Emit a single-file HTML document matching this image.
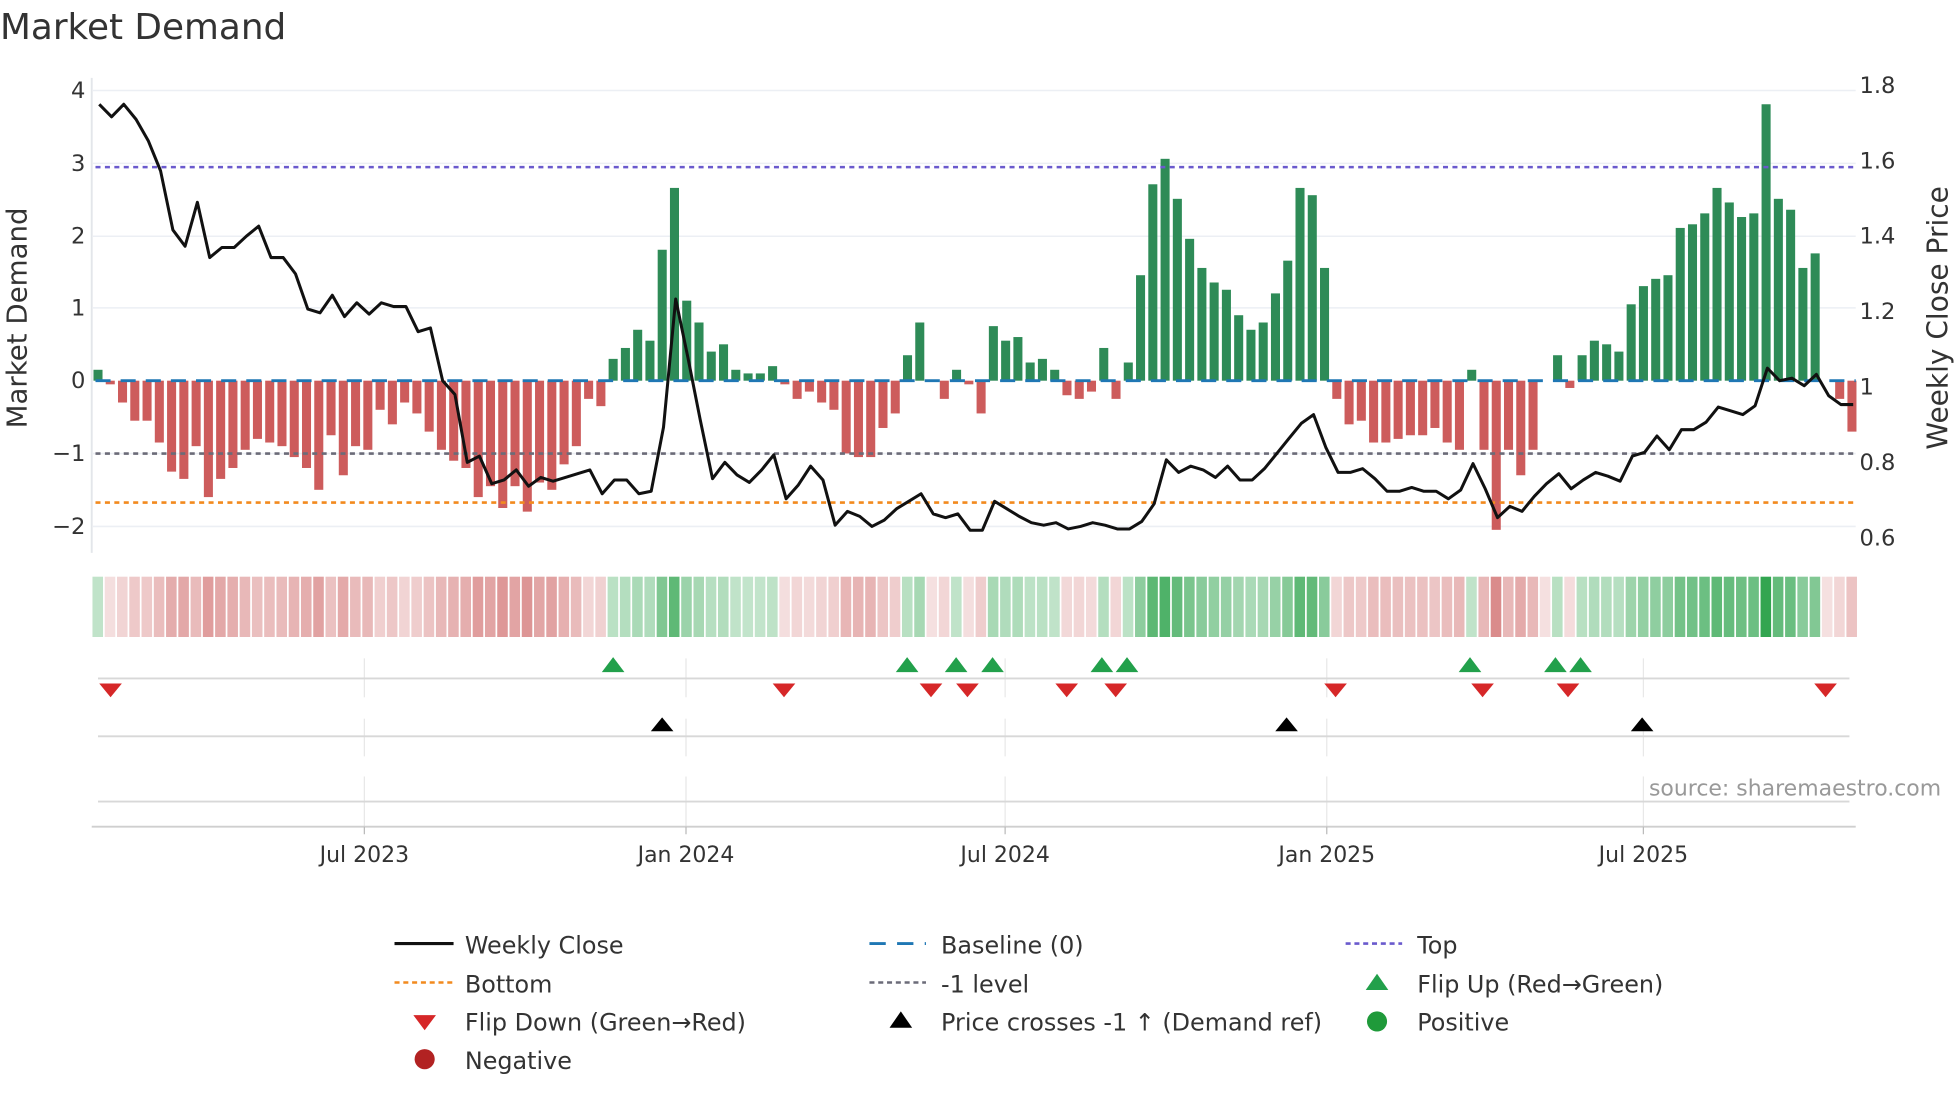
<!DOCTYPE html>
<html><head><meta charset="utf-8"><style>
html,body{margin:0;padding:0;background:#fff;}
svg{display:block;font-family:"DejaVu Sans","Liberation Sans",sans-serif;}
</style></head><body>
<svg id="s" width="1960" height="1102" viewBox="0 0 1560 877.1" preserveAspectRatio="none" xmlns="http://www.w3.org/2000/svg">
<text x="0" y="31" font-size="28.5" fill="#333">Market Demand</text>
<g id="grid" stroke="#eceff4" stroke-width="1.2">
<line x1="74" x2="1477" y1="72" y2="72"/><line x1="74" x2="1477" y1="130" y2="130"/><line x1="74" x2="1477" y1="188" y2="188"/><line x1="74" x2="1477" y1="245" y2="245"/><line x1="74" x2="1477" y1="361" y2="361"/><line x1="74" x2="1477" y1="419" y2="419"/>
</g>
<line x1="73" x2="73" y1="62" y2="440" stroke="#e3e6ea" stroke-width="1.5"/>
<g font-size="18" fill="#333" text-anchor="end">
<text x="68" y="78">4</text><text x="68" y="136">3</text><text x="68" y="194">2</text><text x="68" y="251">1</text><text x="68" y="309">0</text><text x="68" y="367">−1</text><text x="68" y="425">−2</text>
</g>
<g font-size="18" fill="#333">
<text x="1480" y="74">1.8</text><text x="1480" y="134">1.6</text><text x="1480" y="194">1.4</text><text x="1480" y="254">1.2</text><text x="1480" y="314">1</text><text x="1480" y="374">0.8</text><text x="1480" y="434">0.6</text>
</g>
<text transform="translate(21,253) rotate(-90)" font-size="22" fill="#333" text-anchor="middle">Market Demand</text>
<text transform="translate(1550,253) rotate(-90)" font-size="22.3" fill="#333" text-anchor="middle">Weekly Close Price</text>
<g id="bars"></g>
<line x1="76" x2="1477" y1="303" y2="303" stroke="#1f77b4" stroke-width="2.2" stroke-dasharray="12 8"/>
<line x1="76" x2="1477" y1="133" y2="133" stroke="#6a5acd" stroke-width="2" stroke-dasharray="4 3.5"/>
<line x1="76" x2="1477" y1="361" y2="361" stroke="#6b6b78" stroke-width="2" stroke-dasharray="4 3.5"/>
<line x1="76" x2="1477" y1="400" y2="400" stroke="#f28a1e" stroke-width="2" stroke-dasharray="4 3.5"/>
<polyline id="price" fill="none" stroke="#111" stroke-width="2.4" stroke-linejoin="round"/>
<g id="heat"></g>
<g stroke="#e8e8e8" stroke-width="1">
<line x1="290" x2="290" y1="524" y2="555"/><line x1="546" x2="546" y1="524" y2="555"/><line x1="800" x2="800" y1="524" y2="555"/><line x1="1056" x2="1056" y1="524" y2="555"/><line x1="1308" x2="1308" y1="524" y2="555"/>
<line x1="290" x2="290" y1="572" y2="602"/><line x1="546" x2="546" y1="572" y2="602"/><line x1="800" x2="800" y1="572" y2="602"/><line x1="1056" x2="1056" y1="572" y2="602"/><line x1="1308" x2="1308" y1="572" y2="602"/>
<line x1="290" x2="290" y1="618" y2="658"/><line x1="546" x2="546" y1="618" y2="658"/><line x1="800" x2="800" y1="618" y2="658"/><line x1="1056" x2="1056" y1="618" y2="658"/><line x1="1308" x2="1308" y1="618" y2="658"/>
</g>
<line x1="78" x2="1472" y1="540" y2="540" stroke="#d8d8d8" stroke-width="1.5"/>
<line x1="78" x2="1472" y1="586" y2="586" stroke="#d8d8d8" stroke-width="1.5"/>
<line x1="78" x2="1472" y1="638" y2="638" stroke="#d8d8d8" stroke-width="1.5"/>
<line x1="73" x2="1477" y1="658" y2="658" stroke="#cfcfcf" stroke-width="1.5"/>
<g stroke="#bbb" stroke-width="1"><line x1="290" x2="290" y1="658" y2="664"/><line x1="546" x2="546" y1="658" y2="664"/><line x1="800" x2="800" y1="658" y2="664"/><line x1="1056" x2="1056" y1="658" y2="664"/><line x1="1308" x2="1308" y1="658" y2="664"/></g>
<g id="marks"></g>
<text x="1545" y="633" font-size="17.5" fill="#999" text-anchor="end">source: sharemaestro.com</text>
<g font-size="17.5" fill="#333" text-anchor="middle">
<text x="290" y="686">Jul 2023</text><text x="546" y="686">Jan 2024</text><text x="800" y="686">Jul 2024</text><text x="1056" y="686">Jan 2025</text><text x="1308" y="686">Jul 2025</text>
</g>
<g font-size="19" fill="#333">
<line x1="314" x2="361" y1="751" y2="751" stroke="#111" stroke-width="2.5"/><text x="370" y="759">Weekly Close</text>
<line x1="692" x2="737" y1="751" y2="751" stroke="#1f77b4" stroke-width="2.2" stroke-dasharray="13 9"/><text x="749" y="759">Baseline (0)</text>
<line x1="1071" x2="1116" y1="751" y2="751" stroke="#6a5acd" stroke-width="2" stroke-dasharray="4 3"/><text x="1128" y="759">Top</text>
<line x1="314" x2="361" y1="782" y2="782" stroke="#f28a1e" stroke-width="2" stroke-dasharray="4 3"/><text x="370" y="790">Bottom</text>
<line x1="692" x2="737" y1="782" y2="782" stroke="#6b6b78" stroke-width="2" stroke-dasharray="4 3"/><text x="749" y="790">-1 level</text>
<polygon points="1087,788 1105,788 1096,775" fill="#22a04b"/><text x="1128" y="790">Flip Up (Red→Green)</text>
<polygon points="329,808 347,808 338,820" fill="#d62728"/><text x="370" y="820">Flip Down (Green→Red)</text>
<polygon points="708,818 726,818 717,805" fill="#000"/><text x="749" y="820">Price crosses -1 ↑ (Demand ref)</text>
<circle cx="1096" cy="813" r="8" fill="#1f9a3a"/><text x="1128" y="820">Positive</text>
<circle cx="338" cy="843" r="8" fill="#b22222"/><text x="370" y="851">Negative</text>
</g>
</svg>
<script>
var V=[0.15,-0.05,-0.3,-0.55,-0.55,-0.85,-1.25,-1.35,-0.9,-1.6,-1.35,-1.2,-0.95,-0.8,-0.85,-0.9,-1.05,-1.2,-1.5,-0.75,-1.3,-0.9,-0.95,-0.4,-0.6,-0.3,-0.45,-0.7,-0.95,-1.1,-1.2,-1.6,-1.45,-1.75,-1.45,-1.8,-1.4,-1.5,-1.15,-0.9,-0.25,-0.35,0.3,0.45,0.7,0.55,1.8,2.65,1.1,0.8,0.4,0.5,0.15,0.1,0.1,0.2,-0.05,-0.25,-0.15,-0.3,-0.4,-1.0,-1.05,-1.05,-0.65,-0.45,0.35,0.8,0.0,-0.25,0.15,-0.05,-0.45,0.75,0.55,0.6,0.25,0.3,0.15,-0.2,-0.25,-0.15,0.45,-0.25,0.25,1.45,2.7,3.05,2.5,1.95,1.55,1.35,1.25,0.9,0.7,0.8,1.2,1.65,2.65,2.55,1.55,-0.25,-0.6,-0.55,-0.85,-0.85,-0.8,-0.75,-0.75,-0.65,-0.85,-0.95,0.15,-0.95,-2.05,-0.95,-1.3,-0.95,0.0,0.35,-0.1,0.35,0.55,0.5,0.4,1.05,1.3,1.4,1.45,2.1,2.15,2.3,2.65,2.45,2.25,2.3,3.8,2.5,2.35,1.55,1.75,0.0,-0.25,-0.7];
var P=[83,93,83,95,112,136,183,196,161,205,197,197,188,180,205,205,218,246,249,235,252,241,250,241,244,244,264,261,303,314,368,363,385,382,374,387,380,383,380,377,374,393,382,382,393,391,340,238,285,334,381,368,378,384,374,362,397,386,371,382,418,407,411,419,414,405,399,393,409,412,409,422,422,399,405,411,416,418,416,421,419,416,418,421,421,415,401,366,376,371,374,380,371,382,382,373,361,349,337,330,356,376,376,373,381,391,391,388,391,391,397,390,369,389,412,403,407,395,385,377,389,382,376,379,383,363,360,347,358,342,342,336,324,327,330,323,293,303,301,307,298,315,322,322];
var ns="http://www.w3.org/2000/svg";
function el(t,a,p){var e=document.createElementNS(ns,t);for(var k in a)e.setAttribute(k,a[k]);p.appendChild(e);return e;}
var bars=document.getElementById('bars'),heat=document.getElementById('heat');
var dx=(1474-78)/143,pts=[];
for(var i=0;i<V.length;i++){
 var x=78+dx*i,v=V[i],h=Math.abs(v)*57.9;
 if(v>0)el('rect',{x:x-3.6,y:303-h,width:7.2,height:h,fill:'#2e8b57'},bars);
 else if(v<0)el('rect',{x:x-3.6,y:303,width:7.2,height:h,fill:'#cd5c5c'},bars);
 var c;
 if(v>0){var a=0.28+0.72*Math.min(v/3.8,1);c='rgb('+Math.round(255-(255-50)*a)+','+Math.round(255-(255-165)*a)+','+Math.round(255-(255-80)*a)+')';}
 else{var a=0.2+0.55*Math.min(-v/2.05,1);c='rgb('+Math.round(255-(255-205)*a)+','+Math.round(255-(255-100)*a)+','+Math.round(255-(255-100)*a)+')';}
 el('rect',{x:x-4.4,y:459,width:8.4,height:48,fill:c},heat);
 pts.push((x+1).toFixed(1)+','+P[i]);
}
document.getElementById('price').setAttribute('points',pts.join(' '));
var m=document.getElementById('marks');
[488,722,761,790,877,897,1170,1238,1258].forEach(function(x){el('polygon',{points:(x-9)+',535 '+(x+9)+',535 '+x+',523',fill:'#22a04b'},m);});
[88,624,741,770,849,888,1063,1180,1248,1453].forEach(function(x){el('polygon',{points:(x-9)+',544 '+(x+9)+',544 '+x+',555',fill:'#d62728'},m);});
[527,1024,1307].forEach(function(x){el('polygon',{points:(x-9)+',582 '+(x+9)+',582 '+x+',571',fill:'#000'},m);});
</script>
</body></html>
